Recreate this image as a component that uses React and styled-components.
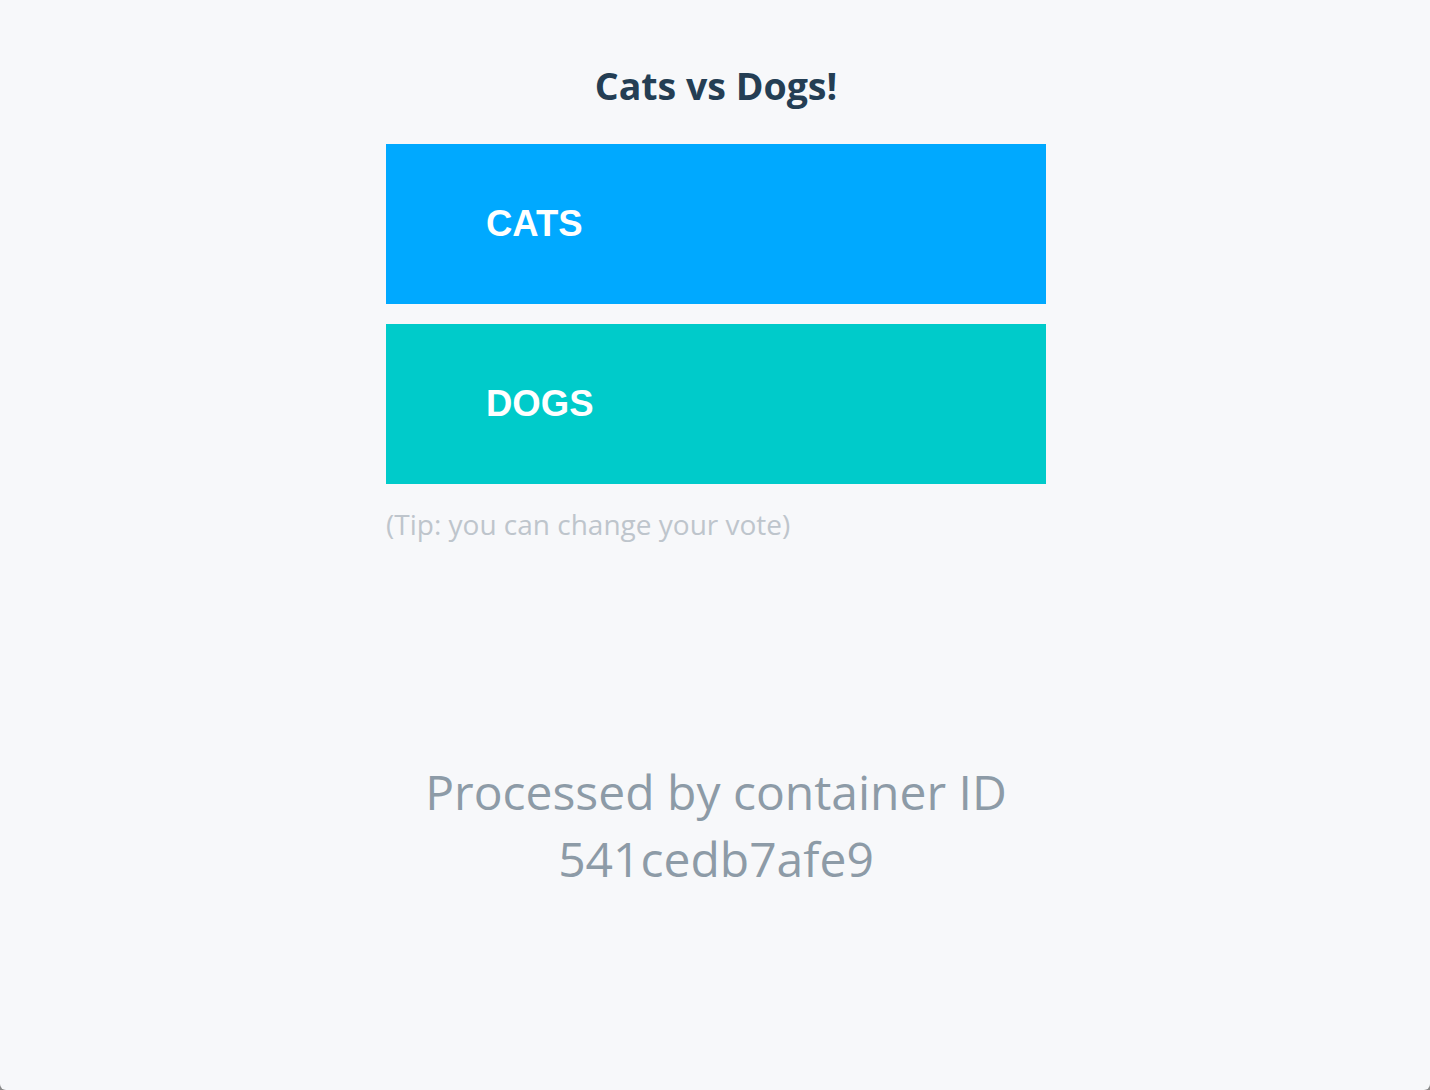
import React from 'react';
import styled, { createGlobalStyle } from 'styled-components';

const GlobalStyle = createGlobalStyle`
  html, body {
    margin: 0;
    padding: 0;
    background: #8a8a8a;
  }
`;

const Page = styled.main`
  min-height: 1090px;
  box-sizing: border-box;
  background: #f7f8fa;
  border-radius: 0 0 6px 6px;
  display: flex;
  flex-direction: column;
  align-items: center;
  padding: 58px 0 0 2px;
  font-family: 'Open Sans', 'Noto Sans', sans-serif;
`;

const Title = styled.h1`
  margin: 0 0 31px;
  font-size: 37.5px;
  line-height: 55px;
  font-weight: 700;
  color: #243e54;
`;

const Choices = styled.div`
  width: 660px;
  display: flex;
  flex-direction: column;
  gap: 20px;
`;

const Choice = styled.button`
  height: 160px;
  border: 0;
  margin: 0;
  padding: 0 0 0 100px;
  text-align: left;
  background: ${p => p.$color};
  color: #fff;
  font-family: 'Liberation Sans', Arial, sans-serif;
  font-weight: 700;
  font-size: 36.5px;
  cursor: pointer;
`;

const Tip = styled.p`
  width: 660px;
  margin: 22px 0 0;
  font-size: 28px;
  line-height: 36px;
  color: #bec5cc;
`;

const Footer = styled.p`
  margin: 216px 0 0;
  text-align: center;
  font-size: 48px;
  line-height: 67px;
  color: #8d9ba7;
`;

export default function App() {
  return (
    <>
      <GlobalStyle />
      <Page>
        <Title>Cats vs Dogs!</Title>
        <Choices>
          <Choice $color="#00a9ff">CATS</Choice>
          <Choice $color="#00cbca">DOGS</Choice>
        </Choices>
        <Tip>(Tip: you can change your vote)</Tip>
        <Footer>
          Processed by container ID
          <br />
          541cedb7afe9
        </Footer>
      </Page>
    </>
  );
}
